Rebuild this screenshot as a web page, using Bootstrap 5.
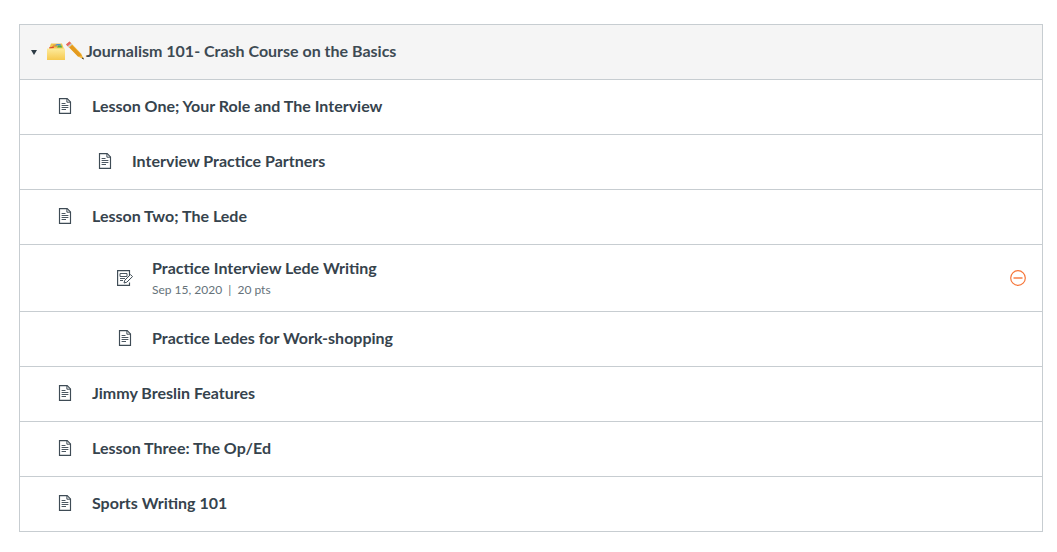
<!DOCTYPE html>
<html lang="en">
<head>
    <meta charset="UTF-8">
    <meta name="viewport" content="width=device-width, initial-scale=1.0">
    <title>Modules</title>
    <link href="https://cdn.jsdelivr.net/npm/bootstrap@5.3.0/dist/css/bootstrap.min.css" rel="stylesheet">
    <style>
        body {
            font-family: Lato, "Liberation Sans", sans-serif;
            color: #2d3b45;
            background: #fff;
        }
        .module-box {
            margin: 24px 14px 0 19px;
            border: 1px solid #c7cdd1;
        }
        .module-head {
            height: 55px;
            background: #f5f5f5;
            border-bottom: 1px solid #c7cdd1;
            font-size: 16px;
            font-weight: 700;
            color: #3d4a53;
            padding-left: 11px;
            padding-bottom: 2px;
        }
        .caret-down {
            width: 0;
            height: 0;
            border-left: 3.5px solid transparent;
            border-right: 3.5px solid transparent;
            border-top: 5px solid #2d3b45;
            margin-right: 9px;
            margin-top: 3px;
        }
        .head-emoji { display: block; }
        .item-row {
            height: 55px;
            border-bottom: 1px solid #c7cdd1;
            font-size: 16px;
            font-weight: 700;
            padding-bottom: 2px;
            color: #36434d;
        }
        .item-row:last-child { border-bottom: 0; height: 54px; }
        .item-row.tall { height: 67px; padding-bottom: 1px; }
        .indent-0 { padding-left: 37px; }
        .indent-1 { padding-left: 77px; }
        .indent-2 { padding-left: 97px; }
        .item-icon { width: 16px; height: 16px; margin-right: 19px; flex: none; display: block; }
        .item-meta {
            font-size: 12px;
            font-weight: 400;
            color: #66727a;
            margin-top: 4px;
            line-height: 16px;
        }
        .item-title { line-height: 20px; }
        .status-icon { margin-left: auto; margin-right: 16px; display: block; }
    </style>
</head>
<body>
    <svg width="0" height="0" class="position-absolute">
        <defs>
            <linearGradient id="folderFront" x1="0" y1="0" x2="0" y2="1">
                <stop offset="0" stop-color="#fdeb9c"/>
                <stop offset="1" stop-color="#f6c94f"/>
            </linearGradient>
        </defs>
        <symbol id="page" viewBox="0 0 16 16">
            <path d="M2.5 .6H10.2L13.5 3.9V15.4H2.5Z" fill="none" stroke="#3e4b55" stroke-width="1.15"/>
            <path d="M9.9 .8V4.2H13.3" fill="none" stroke="#3e4b55"/>
            <path d="M4.6 5.5H8.5M4.6 7.5H11.4M4.6 9.5H11.4M4.6 11.5H9" fill="none" stroke="#4b5761"/>
        </symbol>
        <symbol id="assignment" viewBox="0 0 16 16">
            <path d="M12.5 6V.6H.6V15.4H12.5V12.5" fill="none" stroke="#3e4b55" stroke-width="1.15"/>
            <path d="M3 3.5H10V6.5H3ZM3 8.5H8M3 10.5H6" fill="none" stroke="#4b5761"/>
            <path d="M7 13L7.8 10.2L13.5 4.6L15.5 6.6L9.8 12.2Z" fill="#fff" stroke="#3e4b55"/>
        </symbol>
    </svg>

    <div class="module-box">
        <div class="module-head d-flex align-items-center">
            <span class="caret-down"></span>
            <svg class="head-emoji" width="40" height="20" viewBox="0 0 40 20">
                <g transform="translate(1 0)">
                    <path d="M2 8L4 2.5H15L17 8Z" fill="#f2c84f"/>
                    <path d="M5 6L6.5 3.5H10V6Z" fill="#e8a13a"/>
                    <path d="M7.5 4.5L10 3H13.5L14 4.5Z" fill="#4a90d9"/>
                    <path d="M10 6.5L11 4.5H14.5L15 6.5Z" fill="#4caf50"/>
                    <path d="M2 6.5L6.5 5.5L7 7L2.5 7.8Z" fill="#e0452f"/>
                    <path d="M0 7.5H18V19H0Z" fill="url(#folderFront)"/>
                </g>
                <path d="M20 3.5L23.5 .5L35 12.5L38 18.5L32 15.5Z" fill="#f5b83a"/>
                <path d="M23.5 6.5L26 4L36 14.5L32 15.5Z" fill="#e39a1f"/>
                <path d="M20 3.5L23.5 .5L25.2 2.3L21.7 5.3Z" fill="#e8636b"/>
                <path d="M21.7 5.3L25.2 2.3L26.2 3.4L22.7 6.4Z" fill="#c7ccd0"/>
                <path d="M35.8 17.4L37 16.2L38 18.5Z" fill="#333"/>
            </svg>
            <span>Journalism 101- Crash Course on the Basics</span>
        </div>

        <div class="item-row indent-0 d-flex align-items-center">
            <svg class="item-icon"><use href="#page"/></svg>
            <span>Lesson One; Your Role and The Interview</span>
        </div>
        <div class="item-row indent-1 d-flex align-items-center">
            <svg class="item-icon"><use href="#page"/></svg>
            <span>Interview Practice Partners</span>
        </div>
        <div class="item-row indent-0 d-flex align-items-center">
            <svg class="item-icon"><use href="#page"/></svg>
            <span>Lesson Two; The Lede</span>
        </div>
        <div class="item-row tall indent-2 d-flex align-items-center">
            <svg class="item-icon"><use href="#assignment"/></svg>
            <div>
                <div class="item-title">Practice Interview Lede Writing</div>
                <div class="item-meta">Sep 15, 2020 &nbsp;|&nbsp; 20 pts</div>
            </div>
            <svg class="status-icon" width="16" height="16" viewBox="0 0 16 16">
                <circle cx="8" cy="8" r="7.3" fill="none" stroke="#f6763a" stroke-width="1.2"/>
                <path d="M3.5 8H12.5" stroke="#f6763a" stroke-width="1.4"/>
            </svg>
        </div>
        <div class="item-row indent-2 d-flex align-items-center">
            <svg class="item-icon"><use href="#page"/></svg>
            <span>Practice Ledes for Work-shopping</span>
        </div>
        <div class="item-row indent-0 d-flex align-items-center">
            <svg class="item-icon"><use href="#page"/></svg>
            <span>Jimmy Breslin Features</span>
        </div>
        <div class="item-row indent-0 d-flex align-items-center">
            <svg class="item-icon"><use href="#page"/></svg>
            <span>Lesson Three: The Op/Ed</span>
        </div>
        <div class="item-row indent-0 d-flex align-items-center">
            <svg class="item-icon"><use href="#page"/></svg>
            <span>Sports Writing 101</span>
        </div>
    </div>

    <script src="https://cdn.jsdelivr.net/npm/bootstrap@5.3.0/dist/js/bootstrap.bundle.min.js"></script>
</body>
</html>
